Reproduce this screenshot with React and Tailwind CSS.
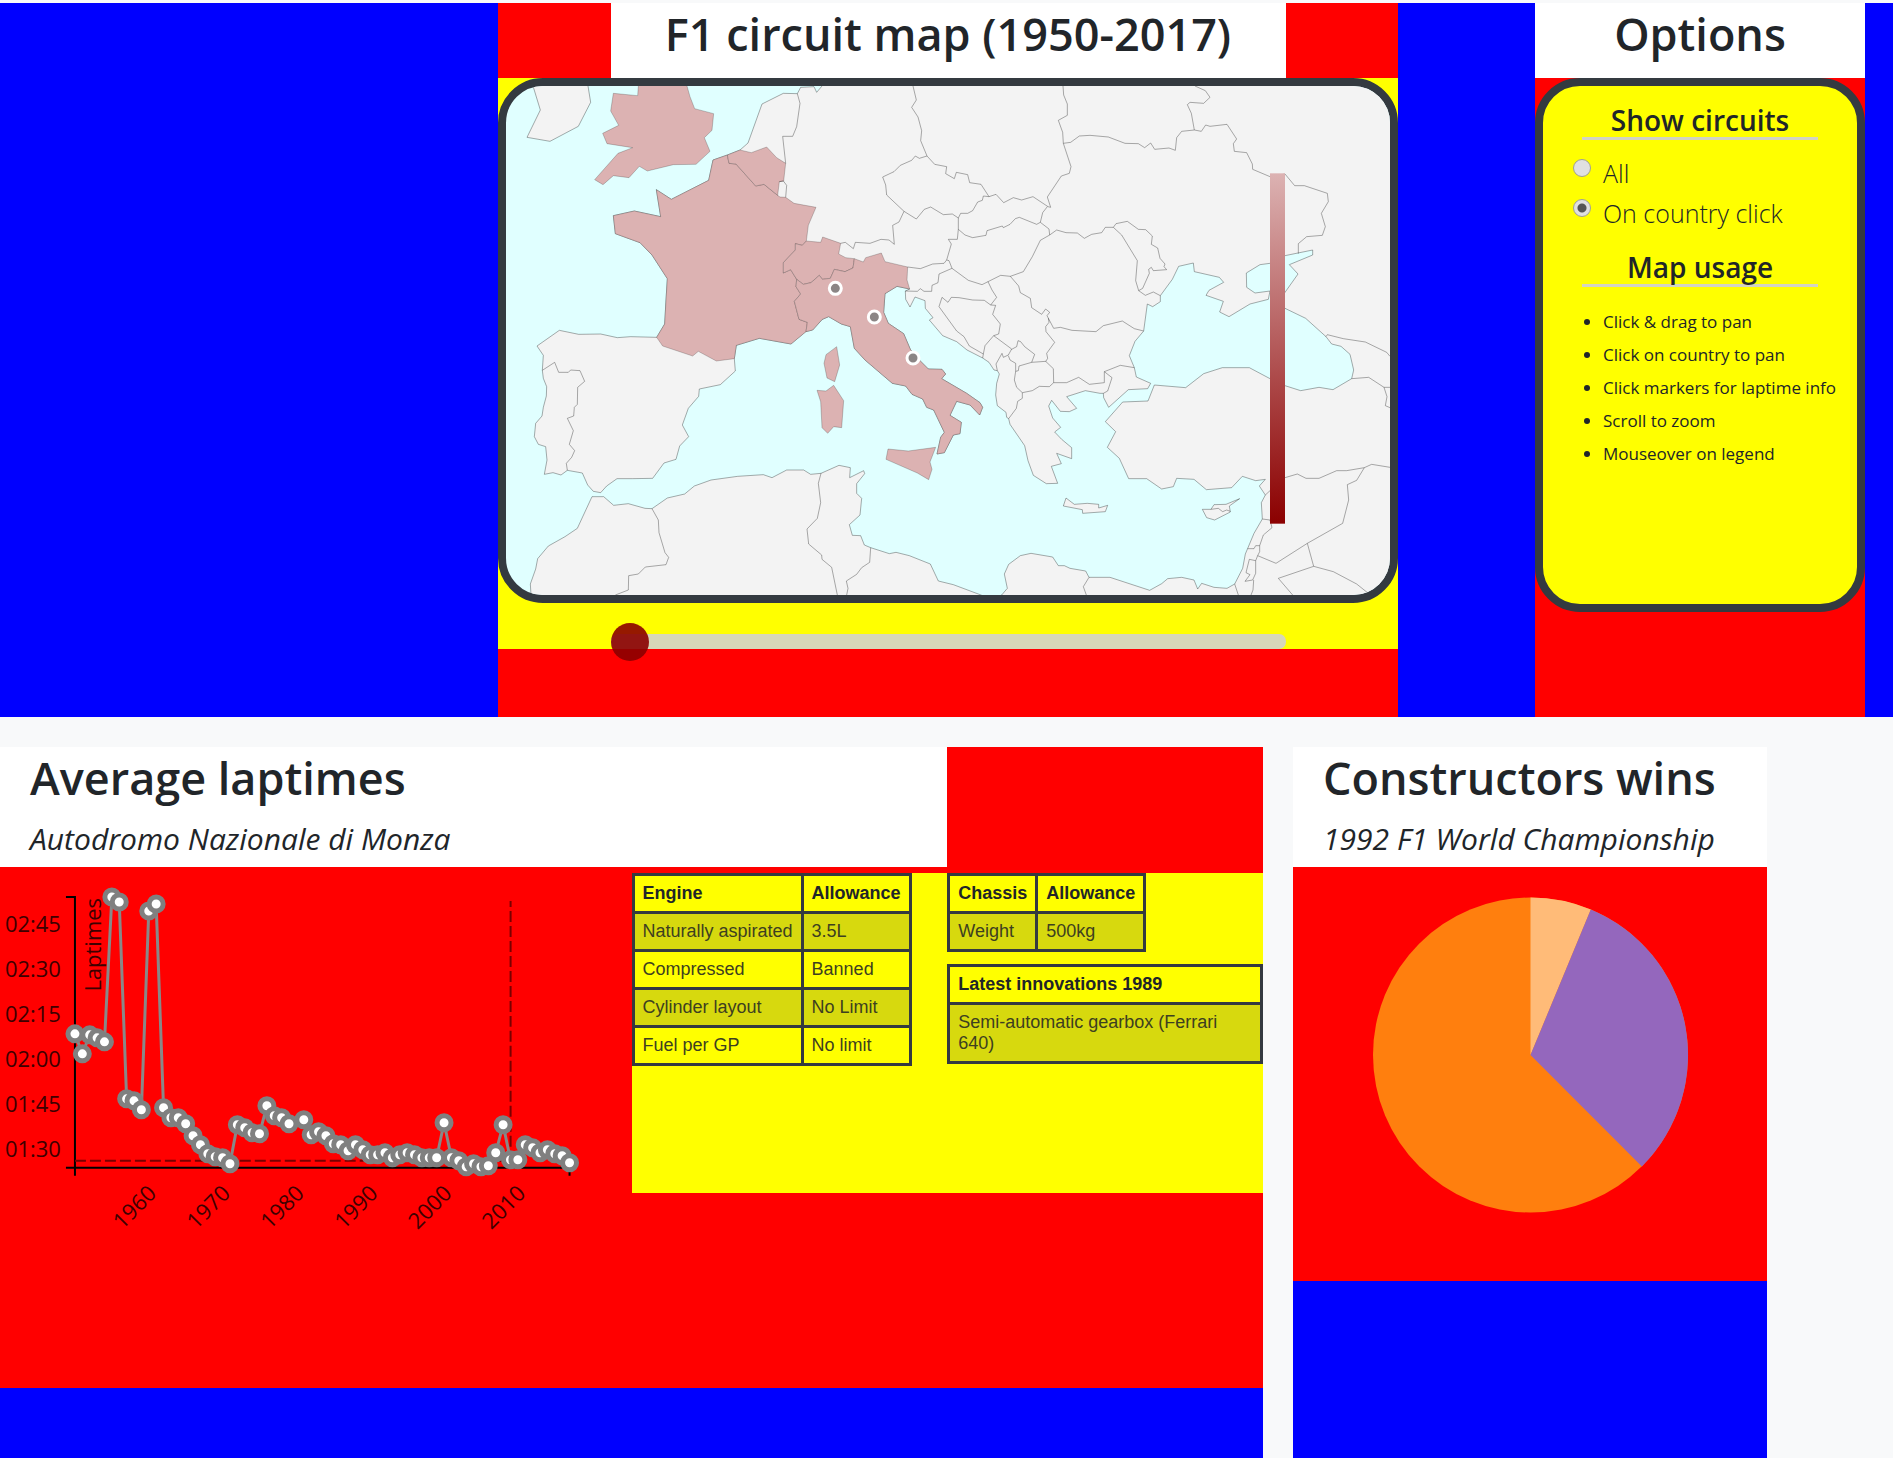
import React from 'react';

/* ---------- Map geometry (map units: three per pixel) ---------- */

const MAINLAND =
  'M996 258L980 277L972 260L932 262L922 281L880 280L816 312L774 429L750 450L712 465L669 480L656 541L544 598L499 569L512 650L433 633L370 647L376 701L450 728L486 765L532 836L528 900L524 972L500 1012L422 1010L382 1013L332 1002L266 1003L208 991L141 1038L160 1066L157 1111L160 1135L170 1160L169 1188L160 1222L156 1248L137 1270L133 1310L145 1333L167 1340L171 1380L163 1423L189 1418L213 1425L232 1411L277 1419L293 1455L310 1474L332 1478L350 1458L381 1436L428 1436L488 1435L522 1389L558 1378L569 1338L596 1310L577 1275L595 1225L626 1189L628 1167L691 1154L736 1113L733 1076L739 1036L808 1015L903 1032L947 995L968 990L997 958L1016 950L1054 972L1081 980L1093 1045L1125 1080L1207 1150L1247 1158L1266 1183L1298 1197L1310 1222L1331 1230L1363 1297L1352 1312L1341 1362L1363 1358L1390 1305L1410 1301L1414 1267L1380 1246L1400 1204L1440 1215L1469 1245L1478 1222L1470 1208L1430 1180L1355 1136L1367 1122L1356 1108L1315 1107L1288 1080L1261 1048L1241 1001L1195 970L1181 937L1185 881L1221 859L1259 867L1246 873L1247 898L1260 921L1275 891L1305 902L1306 925L1329 953L1318 960L1358 1007L1400 1025L1431 1050L1478 1074L1497 1087L1512 1110L1522 1112L1528 1122L1520 1150L1517 1185L1522 1217L1548 1237L1550 1252L1556 1256L1560 1273L1604 1337L1614 1382L1630 1426L1669 1451L1703 1450L1684 1399L1714 1391L1700 1360L1745 1376L1745 1343L1715 1318L1694 1296L1712 1282L1688 1254L1676 1218L1685 1201L1711 1234L1738 1235L1760 1225L1730 1190L1786 1172L1830 1180L1840 1180L1841 1193L1856 1222L1915 1169L1973 1166L1982 1150L1939 1131L1933 1103L1918 1067L1935 1024L1961 993L1972 912L1988 920L2011 905L2011 887L2047 838L2066 799L2110 789L2113 815L2188 832L2201 847L2157 871L2148 886L2200 904L2189 936L2217 950L2280 912L2335 898L2340 873L2295 879L2270 862L2269 819L2310 794L2340 790L2385 767L2468 750L2468 765L2398 794L2424 822L2385 877L2370 900L2385 925L2447 955L2508 1010L2525 1032L2553 1039L2580 1063L2591 1110L2585 1136L2529 1169L2487 1162L2432 1172L2385 1157L2340 1136L2278 1103L2197 1103L2141 1121L2087 1163L1993 1155L1974 1203L1898 1206L1846 1265L1877 1295L1852 1342L1888 1375L1916 1436L1970 1436L2015 1467L2050 1460L2060 1435L2112 1438L2149 1469L2225 1463L2257 1429L2297 1442L2326 1438L2308 1458L2326 1485L2314 1508L2317 1557L2292 1600L2266 1662L2258 1705L2234 1752L2211 1765L2172 1762L2135 1750L2123 1767L2112 1740L2075 1732L2033 1736L2015 1751L1979 1771L1860 1732L1797 1732L1787 1713L1740 1705L1723 1697L1705 1697L1688 1671L1623 1660L1591 1667L1556 1693L1543 1722L1552 1765L1535 1785L1505 1800L1473 1785L1390 1754L1345 1743L1321 1692L1258 1667L1218 1657L1198 1661L1142 1643L1123 1635L1112 1607L1087 1606L1078 1574L1110 1545L1115 1495L1100 1480L1100 1451L1124 1421L1121 1412L1079 1433L1081 1403L1047 1396L993 1420L962 1423L941 1410L890 1410L846 1433L820 1424L743 1429L663 1440L613 1458L584 1482L532 1494L486 1526L465 1525L415 1511L371 1516L341 1490L306 1490L262 1585L225 1610L175 1638L143 1676L137 1707L121 1752L123 1785L123 1850L2750 1850L2750 200L996 200Z';

const ISLANDS = [
  'M129 258L151 330L111 412L180 424L265 379L302 307L294 258L294 200L129 200Z',
  'M1728 1494L1753 1513L1792 1510L1826 1513L1826 1524L1853 1516L1846 1535L1778 1540L1777 1529L1720 1518Z',
  'M2249 1496L2208 1513L2172 1514L2163 1528L2137 1528L2150 1553L2174 1560L2221 1536L2218 1518Z',
];

const HOSTS = [
  { name: 'United Kingdom', d: 'M445 258L443 287L370 280L362 333L386 376L338 400L351 431L428 443L384 460L314 539L339 554L370 527L417 533L448 499L472 513L550 494L618 493L660 454L643 413L666 391L671 341L614 326L600 290L591 258L591 200L445 200Z' },
  { name: 'France', d: 'M712 465L717 490L738 492L797 558L822 553L863 586L870 591L887 592L912 610L978 622L955 676L949 723L937 736L916 731L916 750L880 788L880 819L902 809L920 838L918 860L932 882L913 904L927 958L952 967L948 995L903 1032L808 1015L739 1036L733 1076L679 1083L625 1054L608 1068L518 1038L500 1012L524 972L528 900L532 836L486 765L450 728L376 701L370 647L433 633L512 650L499 569L544 598L656 541L669 480Z' },
  { name: 'Corsica', d: 'M1040 1040L1049 1095L1034 1145L1011 1134L1002 1090L1008 1064Z' },
  { name: 'Belgium', d: 'M712 465L750 450L784 458L830 441L860 473L887 490L881 543L868 545L863 586L822 553L797 558L738 492L717 490Z' },
  { name: 'Switzerland', d: 'M880 788L916 750L916 731L937 736L949 723L992 727L998 711L1052 730L1046 762L1067 773L1093 776L1089 804L1065 815L1033 808L1021 835L997 838L988 826L963 848L940 853L920 838L902 809L880 819Z' },
  { name: 'Italy', d: 'M948 995L952 967L927 958L913 904L932 882L918 860L920 838L940 853L963 848L988 826L997 838L1021 835L1033 808L1065 815L1089 804L1093 776L1120 786L1127 773L1174 759L1185 785L1253 801L1251 840L1259 867L1221 859L1185 881L1181 937L1195 970L1241 1001L1261 1048L1288 1080L1315 1107L1356 1108L1367 1122L1355 1136L1430 1180L1470 1208L1478 1222L1469 1245L1440 1215L1400 1204L1380 1246L1414 1267L1410 1301L1390 1305L1363 1358L1341 1362L1352 1312L1363 1297L1331 1230L1310 1222L1298 1197L1266 1183L1247 1158L1207 1150L1125 1080L1093 1045L1081 980L1054 972L1016 950L997 958L968 990Z' },
  { name: 'Sicily', d: 'M1194 1347L1255 1353L1337 1342L1320 1386L1326 1408L1316 1439L1282 1419L1188 1378Z' },
  { name: 'Sardinia', d: 'M981 1171L1008 1173L1031 1156L1061 1202L1055 1283L1031 1280L1013 1300L996 1283L992 1205Z' },
];

const BORDERS = [
  'M157 1111L194 1087L206 1117L235 1117L242 1110L270 1112L284 1144L263 1162L262 1213L253 1222L251 1248L232 1255L250 1292L238 1333L254 1352L245 1372L229 1390L232 1411',
  'M922 281L930 310L920 380L908 409L878 409L887 490',
  'M1269 258L1279 300L1265 322L1284 351L1295 392L1292 422L1311 468L1334 493L1370 500L1367 521L1393 536L1399 517L1433 524L1439 548L1473 553L1497 590L1518 583L1541 608L1570 593L1595 600L1629 590L1674 620',
  'M1311 468L1288 475L1276 468L1265 481L1231 496L1212 515L1178 531L1187 555L1190 585L1242 634L1279 657L1303 628L1322 621L1360 644L1387 642L1405 654',
  'M1497 590L1480 588L1477 601L1463 606L1448 632L1433 640L1412 640L1405 654L1405 688L1425 705L1448 713L1488 706L1491 692L1537 678L1540 683L1560 673L1576 656L1588 652L1640 673L1651 667L1658 638L1672 620',
  'M1651 667L1677 687L1679 705',
  'M1242 634L1227 666L1208 676L1213 733L1197 720L1173 718L1140 730L1096 727L1090 746L1066 727L1052 730',
  'M1405 688L1402 718L1375 718L1384 732L1370 780',
  'M1253 801L1291 806L1328 792L1362 790L1370 780L1377 782L1386 805L1347 822L1344 848L1326 856L1325 874L1302 874L1291 866L1282 874L1246 873',
  'M1386 805L1435 841L1476 854L1494 845L1532 826L1561 829L1600 815L1627 770L1651 721L1679 705L1700 690L1728 698L1762 699L1783 715L1805 703L1835 698L1846 682L1870 682L1895 705L1942 782L1937 842L1946 872L1966 886L1990 876L2011 887',
  'M1870 682L1878 671L1912 664L1945 688L1967 689L1987 708L1984 733L2003 744L2010 775L2025 792L2022 800L2030 809L1990 812L1984 802L1976 808L1978 820L1958 865L1946 872',
  'M1719 258L1721 285L1732 312L1732 346L1705 361L1718 397L1720 430L1743 500L1738 520L1714 528L1672 591L1682 622L1674 620',
  'M1720 430L1742 427L1768 408L1800 406L1855 411L1905 430L1945 431L1964 443L1982 429L1994 448L2037 444L2056 451L2060 413L2075 394L2113 390L2134 394L2147 375L2160 379L2211 373L2240 417L2230 431L2233 454L2270 458L2287 492L2288 508L2340 530L2385 522L2414 557L2443 557L2512 580L2515 605L2494 640L2506 680L2497 706L2450 710L2425 731L2425 761',
  'M2113 390L2104 340L2092 314L2100 307L2141 310L2160 292L2146 272L2115 258',
  'M1561 829L1586 858L1591 878L1621 895L1625 923L1655 943L1667 927L1679 937L1671 947L1691 985L1711 982L1746 991L1818 995L1840 977L1897 963L1933 986L1961 993',
  'M1675 955L1677 967L1667 980L1668 995L1694 1027L1670 1060L1673 1075L1667 1085',
  'M1494 845L1506 870L1520 892L1502 915L1517 916L1508 943L1531 972L1526 1002L1511 1007',
  'M1502 915L1483 901L1448 900L1407 893L1384 892L1374 907L1356 892L1347 920L1400 993L1422 1010L1438 1038L1480 1062L1478 1074',
  'M1480 1062L1485 1037L1511 1007L1565 1047L1555 1065L1540 1072L1536 1060L1518 1092L1522 1112',
  'M1565 1048L1580 1040L1584 1022L1592 1025L1604 1040L1634 1063L1625 1087L1587 1098L1585 1112L1577 1114L1577 1090L1560 1080L1555 1067',
  'M1625 1087L1667 1084L1690 1106L1691 1148L1678 1160L1648 1159L1627 1172L1597 1178L1580 1162L1573 1140L1577 1114',
  'M1597 1178L1597 1195L1583 1204L1579 1225L1556 1256',
  'M1691 1148L1730 1148L1766 1132L1798 1153L1843 1148L1843 1115L1891 1096L1933 1103',
  'M1843 1115L1866 1133L1853 1173L1840 1180',
  'M2508 1010L2512 1004L2560 1016L2626 1026L2690 1057L2700 1069',
  'M2585 1136L2636 1132L2682 1162L2700 1162M2682 1162L2691 1190L2686 1217L2700 1223',
  'M2326 1485L2340 1472L2385 1433L2422 1422L2448 1435L2487 1435L2540 1412L2570 1412L2623 1403L2645 1393L2700 1402',
  'M2623 1403L2600 1441L2572 1454L2576 1500L2558 1570L2452 1630L2358 1690L2303 1667',
  'M2317 1557L2340 1560L2346 1583L2320 1605L2309 1637L2297 1637L2292 1646L2273 1646',
  'M2309 1637L2309 1655L2303 1667L2297 1682L2278 1678L2268 1718L2280 1724L2265 1744L2288 1740L2297 1720L2297 1682M2291 1740L2289 1770L2283 1785M2234 1752L2245 1785',
  'M2452 1630L2471 1699L2365 1735L2408 1785M2471 1699L2530 1715L2600 1752L2635 1780',
  'M1797 1732L1780 1760L1789 1785',
  'M993 1420L985 1450L992 1508L982 1555L951 1587L956 1632L995 1665L996 1678L1025 1702L1042 1785',
  'M1142 1643L1139 1687L1115 1703L1100 1723L1069 1743L1074 1765L1070 1785',
  'M486 1526L505 1560L507 1598L525 1658L536 1672L528 1694L466 1701L445 1722L416 1727L415 1770L376 1785',
  'M868 545L880 543L890 556L887 592',
  'M2163 1528L2185 1525L2198 1535L2210 1530L2221 1534',
];

const CIRCUITS = [
  [1036, 865],
  [1153, 951],
  [1269, 1074],
];

function CircuitMap() {
  return (
    <div className="overflow-hidden rounded-[45px] border-8 border-[#343a40] bg-[#e0ffff]">
      <svg viewBox="48 258 2652 1527" className="block w-full" role="img" aria-label="Map of Europe with circuits">
        <defs>
          <linearGradient id="legend" x1="0" y1="0" x2="0" y2="1">
            <stop offset="0" stopColor="#dcb2b2" />
            <stop offset="1" stopColor="#8b0000" />
          </linearGradient>
        </defs>
        <g stroke="#000" strokeOpacity="0.32" strokeWidth="3" strokeLinejoin="round">
          <path d={MAINLAND} fill="#f3f3f3" />
          {ISLANDS.map((d) => (
            <path key={d} d={d} fill="#f3f3f3" />
          ))}
          {HOSTS.map((c) => (
            <path key={c.name} d={c.d} fill="#dcb2b2" strokeOpacity="0.2" />
          ))}
          {BORDERS.map((d) => (
            <path key={d} d={d} fill="none" />
          ))}
        </g>
        {CIRCUITS.map(([x, y]) => (
          <circle key={x} cx={x} cy={y} r="18" fill="#8b8585" stroke="#fff" strokeWidth="9" />
        ))}
        <rect x="2340" y="520" width="45" height="1051" fill="url(#legend)" />
      </svg>
    </div>
  );
}

/* ---------- Laptime chart ---------- */

const LAPTIMES = [
  [1950, 1033], [1951, 1053], [1952, 1034], [1953, 1037], [1954, 1041], [1955, 896], [1956, 901],
  [1957, 1098], [1958, 1100], [1959, 1109], [1960, 910], [1961, 903], [1962, 1107], [1963, 1117],
  [1964, 1117], [1965, 1123], [1966, 1135], [1967, 1144], [1968, 1153], [1969, 1156], [1970, 1157],
  [1971, 1163], [1972, 1124], [1973, 1127], [1974, 1132], [1975, 1133], [1976, 1105], [1977, 1115],
  [1978, 1117], [1979, 1123], [1981, 1119], [1982, 1134], [1983, 1131], [1984, 1135], [1985, 1143],
  [1986, 1144], [1987, 1150], [1988, 1144], [1989, 1149], [1990, 1154], [1991, 1154], [1992, 1152],
  [1993, 1157], [1994, 1154], [1995, 1152], [1996, 1154], [1997, 1157], [1998, 1157], [1999, 1157],
  [2000, 1122], [2001, 1157], [2002, 1160], [2003, 1166], [2004, 1163], [2005, 1166], [2006, 1165],
  [2007, 1152], [2008, 1124], [2009, 1159], [2010, 1159], [2011, 1144], [2012, 1147], [2013, 1152],
  [2014, 1149], [2015, 1153], [2016, 1155], [2017, 1162],
];
const yearX = (year) => 75 + ((year - 1950) * 495) / 67;
const TIMES = ['02:45', '02:30', '02:15', '02:00', '01:45', '01:30'];
const YEARS = [1960, 1970, 1980, 1990, 2000, 2010];

function LaptimeChart() {
  return (
    <svg viewBox="0 866 632 380" className="block w-full" role="img" aria-label="Average laptimes per year">
      <g fill="none" stroke="#000" strokeWidth="2">
        <path d="M66 896H75V1175" />
        <path d="M66 1167H570V1175" />
      </g>
      <path d="M75 1160H511V900" fill="none" stroke="#7a0000" strokeWidth="2" strokeDasharray="11 4" />
      <g fill="#3d0000" className="text-[22px]">
        {TIMES.map((t, i) => (
          <text key={t} x="61" y={931 + i * 45} textAnchor="end">{t}</text>
        ))}
        {YEARS.map((y) => (
          <text key={y} transform={`translate(${yearX(y) + 9} 1194) rotate(-45)`} textAnchor="end">{y}</text>
        ))}
        <text transform="translate(101 897) rotate(-90)" textAnchor="end">Laptimes</text>
      </g>
      <polyline
        points={LAPTIMES.map(([year, y]) => `${yearX(year)},${y}`).join(' ')}
        fill="none"
        stroke="#888"
        strokeWidth="3"
      />
      {LAPTIMES.map(([year, y]) => (
        <circle key={year} cx={yearX(year)} cy={y} r="7" fill="#fff" stroke="#808080" strokeWidth="5" />
      ))}
    </svg>
  );
}

/* ---------- Regulation tables ---------- */

function RuleTable({ head, rows, className = '' }) {
  return (
    <table className={`border-collapse text-left ${className}`}>
      <thead>
        <tr>
          {head.map((h) => (
            <th key={h} className="border-3 border-[#343a40] px-2 py-[7px] font-bold text-[#212529]">{h}</th>
          ))}
        </tr>
      </thead>
      <tbody>
        {rows.map((row) => (
          <tr key={row[0]} className="odd:bg-[#d7d90e]">
            {row.map((cell, i) => (
              <td key={i} className="border-3 border-[#343a40] px-2 py-[7px]">{cell}</td>
            ))}
          </tr>
        ))}
      </tbody>
    </table>
  );
}

function Rules() {
  return (
    <div className="mt-[6px] grid h-[320px] grid-cols-2 bg-[#ff0] font-['Liberation_Sans',Arial,sans-serif] text-[18px] leading-[21px] text-[#3d4020]">
      <div>
        <RuleTable
          head={['Engine', 'Allowance']}
          rows={[
            ['Naturally aspirated', '3.5L'],
            ['Compressed', 'Banned'],
            ['Cylinder layout', 'No Limit'],
            ['Fuel per GP', 'No limit'],
          ]}
        />
      </div>
      <div className="flex flex-col items-start gap-3">
        <RuleTable head={['Chassis', 'Allowance']} rows={[['Weight', '500kg']]} />
        <RuleTable className="w-full" head={['Latest innovations 1989']} rows={[['Semi-automatic gearbox (Ferrari 640)']]} />
      </div>
    </div>
  );
}

/* ---------- Options ---------- */

function OptionHeading({ children }) {
  return (
    <h2 className="mx-auto w-3/4 border-b-3 border-[#d3d3c0] text-center text-[28px] leading-[33px] font-semibold whitespace-nowrap">
      {children}
    </h2>
  );
}

function OptionRadio({ label, checked }) {
  return (
    <label className="flex h-10 items-start gap-3 text-[25px] leading-10 font-light">
      <input
        type="radio"
        name="circuits"
        defaultChecked={checked}
        className="mt-[6px] size-[18px] shrink-0 appearance-none rounded-full border border-[#a0a090] bg-[#e0e0e0] checked:bg-[radial-gradient(circle,#555_0_4px,#e0e0e0_5px)]"
      />
      {label}
    </label>
  );
}

function Options() {
  return (
    <section className="bg-[#f00]">
      <h1 className="h-[75px] bg-white pt-[2px] text-center text-[45px] leading-[57px] font-semibold">Options</h1>
      <div className="min-h-[534px] rounded-[45px] border-8 border-[#343a40] bg-[#ff0] pt-[18px]">
        <OptionHeading>Show circuits</OptionHeading>
        <div className="mt-[13px] pl-[30px]">
          <OptionRadio label="All" />
          <OptionRadio label="On country click" checked />
        </div>
        <div className="mt-[18px]">
          <OptionHeading>Map usage</OptionHeading>
        </div>
        <ul className="mt-[18px] list-disc pl-[60px] text-[17px] leading-[33px] whitespace-nowrap">
          <li>Click &amp; drag to pan</li>
          <li>Click on country to pan</li>
          <li>Click markers for laptime info</li>
          <li>Scroll to zoom</li>
          <li>Mouseover on legend</li>
        </ul>
      </div>
    </section>
  );
}

/* ---------- Constructors ---------- */

function Pie() {
  return (
    <svg viewBox="1293 866 474 414" className="block w-full" role="img" aria-label="Wins per constructor">
      <circle cx="1530.5" cy="1054" r="157.5" fill="#ff7f0e" />
      <path d="M1530.5 1054V896.5A157.5 157.5 0 0 1 1590.8 908.5Z" fill="#ffbb78" />
      <path d="M1530.5 1054L1590.8 908.5A157.5 157.5 0 0 1 1641.9 1165.4Z" fill="#9467bd" />
    </svg>
  );
}

function SectionHeader({ title, subtitle, className = '' }) {
  return (
    <header className={`h-[120px] bg-white pl-[30px] whitespace-nowrap ${className}`}>
      <h1 className="pt-[2px] text-[45px] leading-[57px] font-semibold">{title}</h1>
      <h2 className="pt-[15px] text-[30px] leading-[36px] italic">{subtitle}</h2>
    </header>
  );
}

export default function App() {
  return (
    <div className="flex min-h-screen flex-col bg-[#f8f9fa] pt-[3px] font-['Open_Sans','Noto_Sans',sans-serif] text-[#212529]">
      <main className="grid grid-cols-[498fr_900fr_137fr_330fr_28fr] bg-[#00f]">
        <section className="col-start-2 bg-[#f00] pb-[68px]">
          <h1 className="mx-auto h-[75px] w-3/4 bg-white pt-[2px] text-center text-[45px] leading-[57px] font-semibold whitespace-nowrap">
            F1 circuit map (1950-2017)
          </h1>
          <div className="bg-[#ff0]">
            <CircuitMap />
            <input
              type="range"
              min="1950"
              max="2017"
              defaultValue="1950"
              aria-label="Year"
              className="mx-auto mt-[31px] block h-[15px] w-3/4 appearance-none rounded-[7px] bg-[#d7d7b8] [&::-webkit-slider-thumb]:size-[38px] [&::-webkit-slider-thumb]:appearance-none [&::-webkit-slider-thumb]:rounded-full [&::-webkit-slider-thumb]:bg-[#8b0000]/90"
            />
          </div>
        </section>
        <div className="col-start-4 grid">
          <Options />
        </div>
      </main>
      <div className="mt-[30px] grid grow grid-cols-[1263fr_30fr_474fr_126fr]">
        <section className="bg-[#00f]">
          <div className="min-h-[641px] bg-[#f00]">
            <SectionHeader className="w-3/4" title="Average laptimes" subtitle="Autodromo Nazionale di Monza" />
            <div className="grid grid-cols-2">
              <LaptimeChart />
              <Rules />
            </div>
          </div>
        </section>
        <section className="col-start-3 bg-[#00f]">
          <div className="bg-[#f00]">
            <SectionHeader title="Constructors wins" subtitle="1992 F1 World Championship" />
            <Pie />
          </div>
        </section>
      </div>
    </div>
  );
}
